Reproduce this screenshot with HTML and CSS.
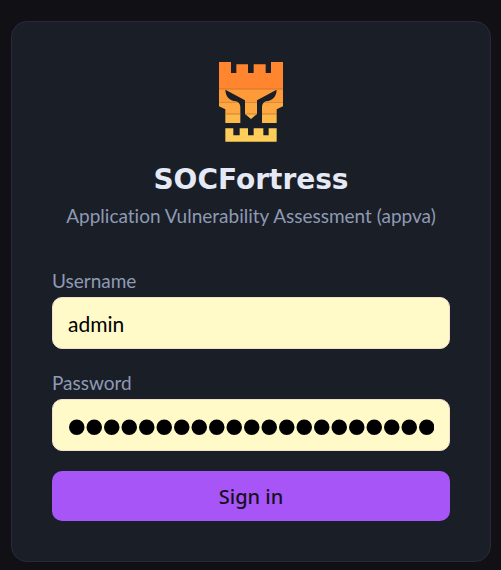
FILE: index.html
```html
<!DOCTYPE html>
<html lang="en">

<head>
    <meta charset="UTF-8">
    <meta name="viewport" content="width=device-width, initial-scale=1.0">
    <title>SOCFortress - Sign in</title>
    <link rel="stylesheet" href="styles.css">
</head>

<body>
    <main class="login-card">
        <!-- Brand -->
        <header class="brand">
            <svg class="logo" viewBox="27 22 192 240" aria-hidden="true">
                <defs>
                    <clipPath id="skull">
                        <path d="M27 22H63V55H79V29H114V55H131V29H167V55H183V22H219V155L200 164V206H156V157Q157 143 168 140C187 138 199 127 200 105L141 137V178L123 193L105 178V137L46 105C47 127 59 138 78 140Q90 143 91 157V206H46V164L27 155Z" />
                    </clipPath>
                </defs>
                <g clip-path="url(#skull)">
                    <path fill="#ff862f" d="M27 22H219V103H27Z" />
                    <path fill="#ff9a38" d="M27 103H219V143H27Z" />
                    <path fill="#ffa841" d="M27 143H219V178H27Z" />
                    <path fill="#fdb94a" d="M27 178H219V206H27Z" />
                    <path stroke="#b9692f" stroke-width="2" d="M27 103H219M27 178H219" />
                </g>
                <path fill="#ffcd59" d="M46 221H70V242H89V221H114V242H131V221H160V242H176V221H200V261H46Z" />
            </svg>
            <h1>SOCFortress</h1>
            <p>Application Vulnerability Assessment (appva)</p>
        </header>

        <!-- Sign in form -->
        <form class="login-form">
            <div class="field">
                <label for="username">Username</label>
                <input type="text" id="username" value="admin" autocomplete="username">
            </div>
            <div class="field">
                <label for="password">Password</label>
                <input type="password" id="password" value="fortress-appva-admin1" autocomplete="current-password">
            </div>
            <button type="submit">Sign in</button>
        </form>
    </main>
</body>

</html>
```

FILE: styles.css
```css
* {
    box-sizing: border-box;
}

body {
    margin: 0;
    padding: 21px 10px 8px 11px;
    background-color: #111115;
    color: #e5e9f5;
    font-family: Lato, "Open Sans", sans-serif;
    font-variant-ligatures: none;
}

.login-card {
    max-width: 480px;
    margin: 0 auto;
    padding: 40px;
    background-color: #1a1e27;
    border: 1px solid #2d2640;
    border-radius: 16px;
}

/* Brand */
.brand {
    display: flex;
    flex-direction: column;
    align-items: center;
    margin-bottom: 40px;
    text-align: center;
}

.logo {
    width: 64px;
    height: 80px;
}

.brand h1 {
    margin: 20px 0 7px;
    font-family: "DejaVu Sans", sans-serif;
    font-size: 28px;
    font-weight: 700;
    line-height: 36px;
}

.brand p {
    margin: 0;
    color: #8e9ab3;
    font-size: 19px;
    line-height: 22px;
    white-space: nowrap;
}

/* Form */
.login-form {
    display: flex;
    flex-direction: column;
    gap: 20px;
}

.field {
    display: flex;
    flex-direction: column;
    gap: 3px;
}

.field label {
    color: #8e9ab3;
    font-size: 19px;
    line-height: 27px;
}

.field input {
    width: 100%;
    height: 52px;
    padding: 0 15px;
    background-color: #fffac8;
    border: 1px solid #f3dfcf;
    border-radius: 10px;
    color: #000;
    font-family: inherit;
    font-size: 21px;
    outline: none;
}

.field input[type="password"] {
    padding-top: 4px;
    font-family: "Liberation Sans", sans-serif;
    font-size: 50px;
    -webkit-text-stroke: 2px #000;
}

.login-form button {
    height: 50px;
    border: none;
    border-radius: 10px;
    background-color: #a855f7;
    color: #14101c;
    font-family: "Noto Sans", sans-serif;
    font-size: 20px;
    font-weight: 500;
    cursor: pointer;
}
```
